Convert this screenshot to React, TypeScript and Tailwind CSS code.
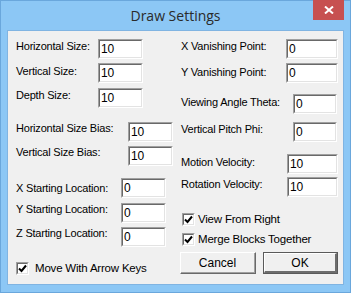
import React from "react";

const font = { fontFamily: '"Liberation Sans", Arial, sans-serif' };

function Field({ w, value }: { w: number; value: string }) {
  return (
    <div
      className="h-[20px] shrink-0 border-t border-l border-t-[#a0a0a0] border-l-[#a0a0a0] border-b border-r border-b-white border-r-white"
      style={{ width: w }}
    >
      <div className="h-full w-full bg-white border-t border-l border-t-[#696969] border-l-[#696969] border-b border-r border-b-[#e3e3e3] border-r-[#e3e3e3] pl-[1px] text-[12px] leading-[16px] text-black tracking-[-0.2px]">
        {value}
      </div>
    </div>
  );
}

function Check() {
  return (
    <div className="w-[13px] h-[13px] shrink-0 border-t border-l border-t-[#a0a0a0] border-l-[#a0a0a0] border-b border-r border-b-white border-r-white">
      <div className="w-full h-full bg-white border-t border-l border-t-[#696969] border-l-[#696969] border-b border-r border-b-[#e3e3e3] border-r-[#e3e3e3] flex items-center justify-center">
        <svg width="9" height="9" viewBox="0 0 9 9">
          <path d="M1 4.5 L3.5 7 L8 1.5" stroke="#000" strokeWidth="2" fill="none" />
        </svg>
      </div>
    </div>
  );
}

function Row({
  mt,
  labelW,
  labelMt,
  label,
  w,
  value,
}: {
  mt: number;
  labelW: number;
  labelMt: number;
  label: string;
  w: number;
  value: string;
}) {
  return (
    <div className="flex items-start" style={{ marginTop: mt }}>
      <div
        className="shrink-0 text-[11px] leading-[14px] tracking-[-0.2px] text-black whitespace-nowrap"
        style={{ width: labelW, marginTop: labelMt }}
      >
        {label}
      </div>
      <Field w={w} value={value} />
    </div>
  );
}

export default function App() {
  return (
    <div
      className="w-[351px] h-[293px] bg-[#8cc7f5] border border-[#6aa7dc] px-[6px] flex flex-col relative"
      style={font}
    >
      <div className="h-[29px] flex items-center justify-center">
        <span
          className="text-[14px] text-[#2a2a2a] leading-none mt-[1px]"
          style={{ fontFamily: '"Open Sans", "Noto Sans", sans-serif' }}
        >
          Draw Settings
        </span>
      </div>
      <div className="absolute top-[-1px] right-[6px] w-[31px] h-[20px] bg-[#c75050] flex items-center justify-center">
        <svg width="10" height="8" viewBox="0 0 10 8">
          <path d="M1 0.5 L9 7.5 M9 0.5 L1 7.5" stroke="#fff" strokeWidth="2" />
        </svg>
      </div>
      <div className="h-[255px] border border-[#80b4e2] bg-[#f0f0f0] flex pl-[8px]">
        {/* left column */}
        <div className="w-[165px] flex flex-col">
          <Row mt={8} labelW={82} labelMt={0} label="Horizontal Size:" w={45} value="10" />
          <Row mt={4} labelW={82} labelMt={1} label="Vertical Size:" w={45} value="10" />
          <Row mt={5} labelW={82} labelMt={0} label="Depth Size:" w={45} value="10" />
          <Row mt={14} labelW={112} labelMt={-1} label="Horizontal Size Bias:" w={45} value="10" />
          <Row mt={4} labelW={112} labelMt={-1} label="Vertical Size Bias:" w={45} value="10" />
          <Row mt={12} labelW={105} labelMt={3} label="X Starting Location:" w={45} value="0" />
          <Row mt={5} labelW={105} labelMt={-1} label="Y Starting Location:" w={45} value="0" />
          <Row mt={4} labelW={105} labelMt={-1} label="Z Starting Location:" w={45} value="0" />
          <div className="flex items-center mt-[14px]">
            <Check />
            <span className="ml-[6px] text-[11.5px] leading-[14px] tracking-[-0.2px] text-black">
              Move With Arrow Keys
            </span>
          </div>
        </div>
        {/* right column */}
        <div className="flex flex-col">
          <Row mt={8} labelW={105} labelMt={0} label="X Vanishing Point:" w={52} value="0" />
          <Row mt={4} labelW={105} labelMt={2} label="Y Vanishing Point:" w={52} value="0" />
          <Row mt={11} labelW={112} labelMt={1} label="Viewing Angle Theta:" w={44} value="0" />
          <Row mt={8} labelW={112} labelMt={0} label="Vertical Pitch Phi:" w={44} value="0" />
          <Row mt={12} labelW={106} labelMt={1} label="Motion Velocity:" w={51} value="10" />
          <Row mt={3} labelW={106} labelMt={0} label="Rotation Velocity:" w={51} value="10" />
          <div className="flex items-center mt-[15px] ml-[1px]">
            <Check />
            <span className="ml-[3px] text-[11.5px] leading-[14px] tracking-[-0.2px] text-black">
              View From Right
            </span>
          </div>
          <div className="flex items-center mt-[6px] ml-[1px]">
            <Check />
            <span className="ml-[3px] text-[11.5px] leading-[14px] tracking-[-0.2px] text-black">
              Merge Blocks Together
            </span>
          </div>
          <div className="flex mt-[6px] ml-[-1px] gap-[7px]">
            <div className="w-[76px] h-[22px] border-t border-l border-t-white border-l-white border-b border-r border-b-[#696969] border-r-[#696969]">
              <div className="w-full h-full border-b border-r border-b-[#a0a0a0] border-r-[#a0a0a0] flex items-center justify-center text-[12px] text-black">
                Cancel
              </div>
            </div>
            <div className="w-[75px] h-[22px] border border-[#5a5a5a]">
              <div className="w-full h-full border-t border-l border-t-white border-l-white border-b-2 border-r-2 border-b-[#6d6d6d] border-r-[#6d6d6d] flex items-center justify-center text-[12px] text-black">
                OK
              </div>
            </div>
          </div>
        </div>
      </div>
    </div>
  );
}
